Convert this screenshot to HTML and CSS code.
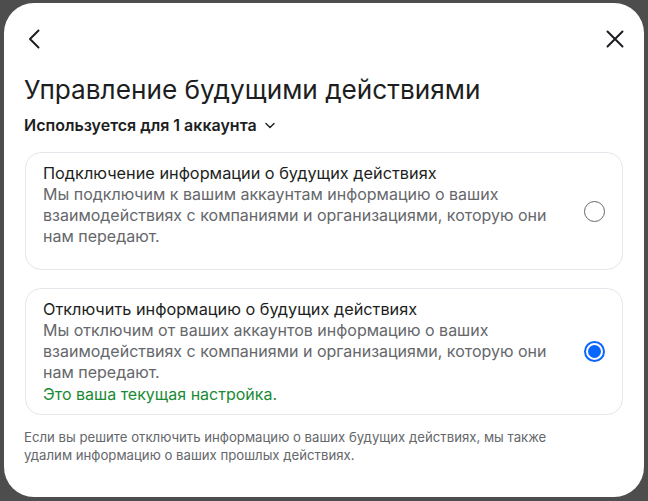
FILE: index.html
```html
<!DOCTYPE html>
<html lang="ru">
<head>
<meta charset="utf-8">
<link rel="stylesheet" href="styles.css">
</head>
<body>
<div class="modal">
  <div class="header">
    <svg class="icon" viewBox="0 0 24 24" width="24" height="24"><path d="M15.5 3.5 L7 12 L15.5 20.5" fill="none" stroke="#1c1e21" stroke-width="2" stroke-linecap="round" stroke-linejoin="round"/></svg>
    <svg class="icon" viewBox="0 0 24 24" width="24" height="24"><path d="M4.5 4.5 L19.5 19.5 M19.5 4.5 L4.5 19.5" fill="none" stroke="#1c1e21" stroke-width="2" stroke-linecap="round"/></svg>
  </div>
  <h1 class="title">Управление будущими действиями</h1>
  <div class="used">Используется для 1 аккаунта
    <svg class="chev" viewBox="0 0 12 12" width="12" height="12"><path d="M2 4.5 L6 8.5 L10 4.5" fill="none" stroke="#1c1e21" stroke-width="1.4" stroke-linecap="round" stroke-linejoin="round"/></svg>
  </div>
  <div class="card">
    <div class="card-text card-text-pad">
      <div class="card-title">Подключение информации о будущих действиях</div>
      <div class="card-desc">Мы подключим к вашим аккаунтам информацию о ваших взаимодействиях с компаниями и организациями, которую они нам передают.</div>
    </div>
    <span class="radio"></span>
  </div>
  <div class="card">
    <div class="card-text">
      <div class="card-title">Отключить информацию о будущих действиях</div>
      <div class="card-desc">Мы отключим от ваших аккаунтов информацию о ваших взаимодействиях с компаниями и организациями, которую они нам передают.</div>
      <div class="card-current">Это ваша текущая настройка.</div>
    </div>
    <span class="radio checked"></span>
  </div>
  <p class="footer">Если вы решите отключить информацию о ваших будущих действиях, мы также удалим информацию о ваших прошлых действиях.</p>
</div>
</body>
</html>
```
FILE: styles.css
```css
html, body {
  margin: 0;
  padding: 0;
}
body {
  background: #4d4d4d;
  width: 648px;
  height: 501px;
  overflow: hidden;
  font-family: Inter, "Noto Sans", sans-serif;
  color: #1c1e21;
}
.modal {
  box-sizing: border-box;
  margin: 3px 4px 0 4px;
  height: 494px;
  background: #fff;
  border-radius: 30px;
  padding: 24px 20px 0 20px;
}
.header {
  display: flex;
  justify-content: space-between;
  margin: 0 -2.5px 0 -1px;
}
.icon {
  display: block;
}
.title {
  margin: 23px 0 0 0;
  font-size: 26.2px;
  font-weight: 400;
  line-height: 32px;
  letter-spacing: 0;
}
.used {
  margin-top: 9px;
  font-size: 16px;
  font-weight: 600;
  line-height: 20px;
  display: flex;
  align-items: center;
  gap: 7px;
}
.chev {
  display: block;
}
.card {
  margin: 17px 1px 0 1px;
  border: 1px solid #e4e6eb;
  border-radius: 16px;
  padding: 9px 17px 9px 17px;
  display: flex;
  align-items: center;
  gap: 20px;
}
.card + .card {
  margin-top: 18px;
}
.card-text {
  flex: 1;
}
.card-text-pad {
  padding-bottom: 13px;
}
.card-title {
  font-size: 16.3px;
  line-height: 22px;
}
.card-desc {
  font-size: 16px;
  line-height: 21px;
  color: #65676b;
}
.card-current {
  font-size: 16px;
  line-height: 22px;
  color: #1a8a34;
}
.radio {
  flex: none;
  box-sizing: border-box;
  width: 21px;
  height: 21px;
  border-radius: 50%;
  border: 1.7px solid #65676b;
  position: relative;
}
.radio.checked {
  border: 2px solid #0866ff;
}
.radio.checked::after {
  content: "";
  position: absolute;
  left: 2px;
  top: 2px;
  width: 13px;
  height: 13px;
  border-radius: 50%;
  background: #0866ff;
}
.footer {
  margin: 13px 0 0 0;
  max-width: 560px;
  font-size: 13.2px;
  line-height: 18px;
  color: #65676b;
}
```
